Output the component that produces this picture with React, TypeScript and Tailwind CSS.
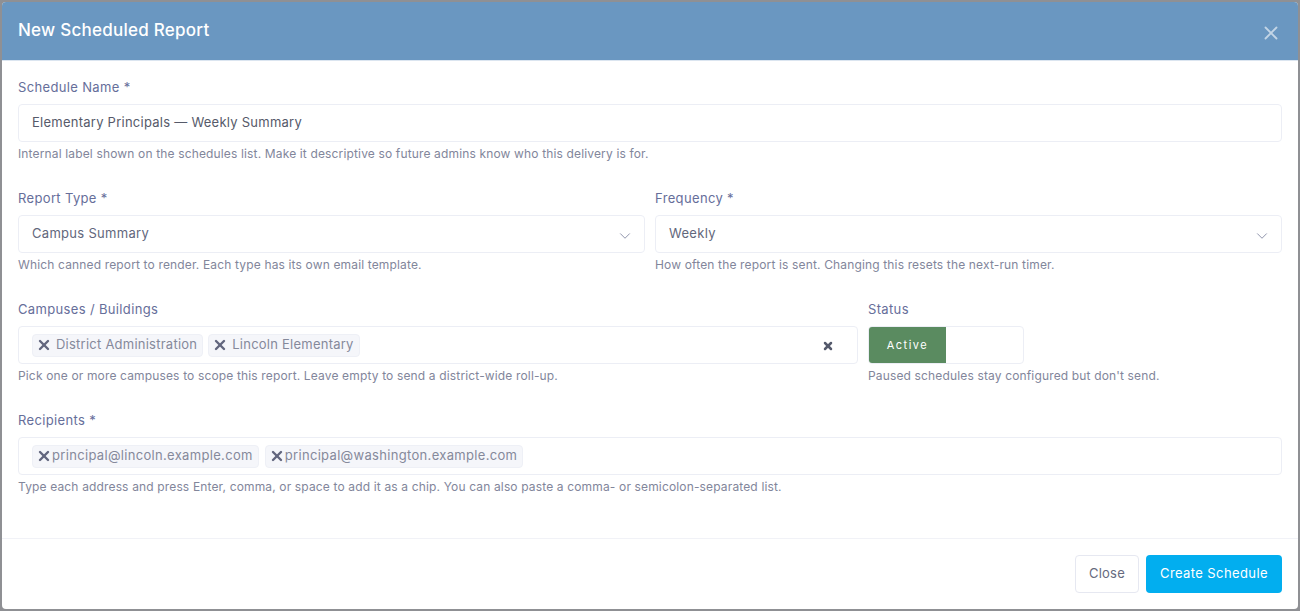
import { ChevronDown, X } from "lucide-react";

const font = { fontFamily: "Inter, sans-serif" };

function Label({ children }: { children: string }) {
  return <div className="h-5 mb-[7px] text-[13px] leading-5 tracking-[0.35px] text-[#666e9a]">{children}</div>;
}

function Hint({ children }: { children: string }) {
  return <div className="h-4 mt-1 text-[12px] leading-4 tracking-[0.15px] text-[#82869b]">{children}</div>;
}

function Select({ value }: { value: string }) {
  return (
    <div className="h-[38px] flex items-center justify-between border border-[#eceef5] rounded pl-[13px] pr-[10px] text-[13px] tracking-[0.3px] text-[#62677c]">
      <span>{value}</span>
      <ChevronDown size={18} strokeWidth={1} className="text-[#6b7190] mt-1" />
    </div>
  );
}

function Chip({ label, wide }: { label: string; wide?: boolean }) {
  return (
    <div className={wide
      ? "h-[23px] flex items-center bg-[#f5f6fa] border border-[#eef0f6] rounded pl-[3px] pr-[5px] text-[13px] tracking-[0.24px] text-[#85899b]"
      : "h-[23px] flex items-center bg-[#f5f6fa] border border-[#eef0f6] rounded pl-[3px] pr-[5px] text-[13px] tracking-[0.32px] text-[#85899b]"}>
      <X size={16} strokeWidth={3.6} className={wide ? "text-[#62667e] mr-[4px]" : "text-[#62667e]"} />
      <span>{label}</span>
    </div>
  );
}

export default function App() {
  return (
    <div style={font} className="h-[611px] w-[1300px] bg-[#8f9094] p-[2px] antialiased">
      <div className="h-full flex flex-col bg-white rounded-sm overflow-hidden">
        <div className="h-[59px] shrink-0 flex items-center justify-between bg-[#6a97c1] border-b border-[#dbe5f0] pl-4 pr-4">
          <h1 className="text-[17px] font-medium tracking-[0.25px] text-white">New Scheduled Report</h1>
          <X size={22} strokeWidth={2} className="text-[#c3d5e6] mt-1" />
        </div>

        <div className="flex-1 pt-4 px-4 flex flex-col gap-[26px]">
          <div>
            <Label>Schedule Name *</Label>
            <div className="h-[38px] flex items-center border border-[#eceef5] rounded px-[13px] text-[13px] tracking-[0.25px] text-[#565a6a]">
              Elementary Principals — Weekly Summary
            </div>
            <Hint>Internal label shown on the schedules list. Make it descriptive so future admins know who this delivery is for.</Hint>
          </div>

          <div className="grid grid-cols-2 gap-[10px]">
            <div>
              <Label>Report Type *</Label>
              <Select value="Campus Summary" />
              <Hint>Which canned report to render. Each type has its own email template.</Hint>
            </div>
            <div>
              <Label>Frequency *</Label>
              <Select value="Weekly" />
              <Hint>How often the report is sent. Changing this resets the next-run timer.</Hint>
            </div>
          </div>

          <div className="flex gap-[10px]">
            <div className="w-[840px]">
              <Label>Campuses / Buildings</Label>
              <div className="h-[38px] flex items-center gap-[5px] border border-[#eceef5] rounded pl-[13px] pr-[23px]">
                <Chip label="District Administration" wide />
                <Chip label="Lincoln Elementary" wide />
                <X size={12} strokeWidth={5} className="ml-auto mt-[2px] text-[#555a6c]" />
              </div>
              <Hint>Pick one or more campuses to scope this report. Leave empty to send a district-wide roll-up.</Hint>
            </div>
            <div className="flex-1">
              <Label>Status</Label>
              <div className="w-[156px] h-[38px] flex border border-[#eceef5] rounded overflow-hidden">
                <div className="w-[77px] flex items-center justify-center bg-[#5a8b60] text-[11px] tracking-[1.5px] text-white">Active</div>
              </div>
              <Hint>Paused schedules stay configured but don't send.</Hint>
            </div>
          </div>

          <div>
            <Label>Recipients *</Label>
            <div className="h-[38px] flex items-center gap-[6px] border border-[#eceef5] rounded pl-[13px]">
              <Chip label="principal@lincoln.example.com" />
              <Chip label="principal@washington.example.com" />
            </div>
            <Hint>Type each address and press Enter, comma, or space to add it as a chip. You can also paste a comma- or semicolon-separated list.</Hint>
          </div>
        </div>

        <div className="h-[71px] shrink-0 flex items-start justify-end gap-[7px] border-t border-[#f1f2f7] pt-4 pr-4">
          <button className="h-[38px] w-[64px] border border-[#e6e8f1] rounded text-[13px] tracking-[0.2px] text-[#666a7e]">Close</button>
          <button className="h-[38px] w-[136px] bg-[#02aeef] rounded text-[13px] tracking-[0.4px] text-white">Create Schedule</button>
        </div>
      </div>
    </div>
  );
}
